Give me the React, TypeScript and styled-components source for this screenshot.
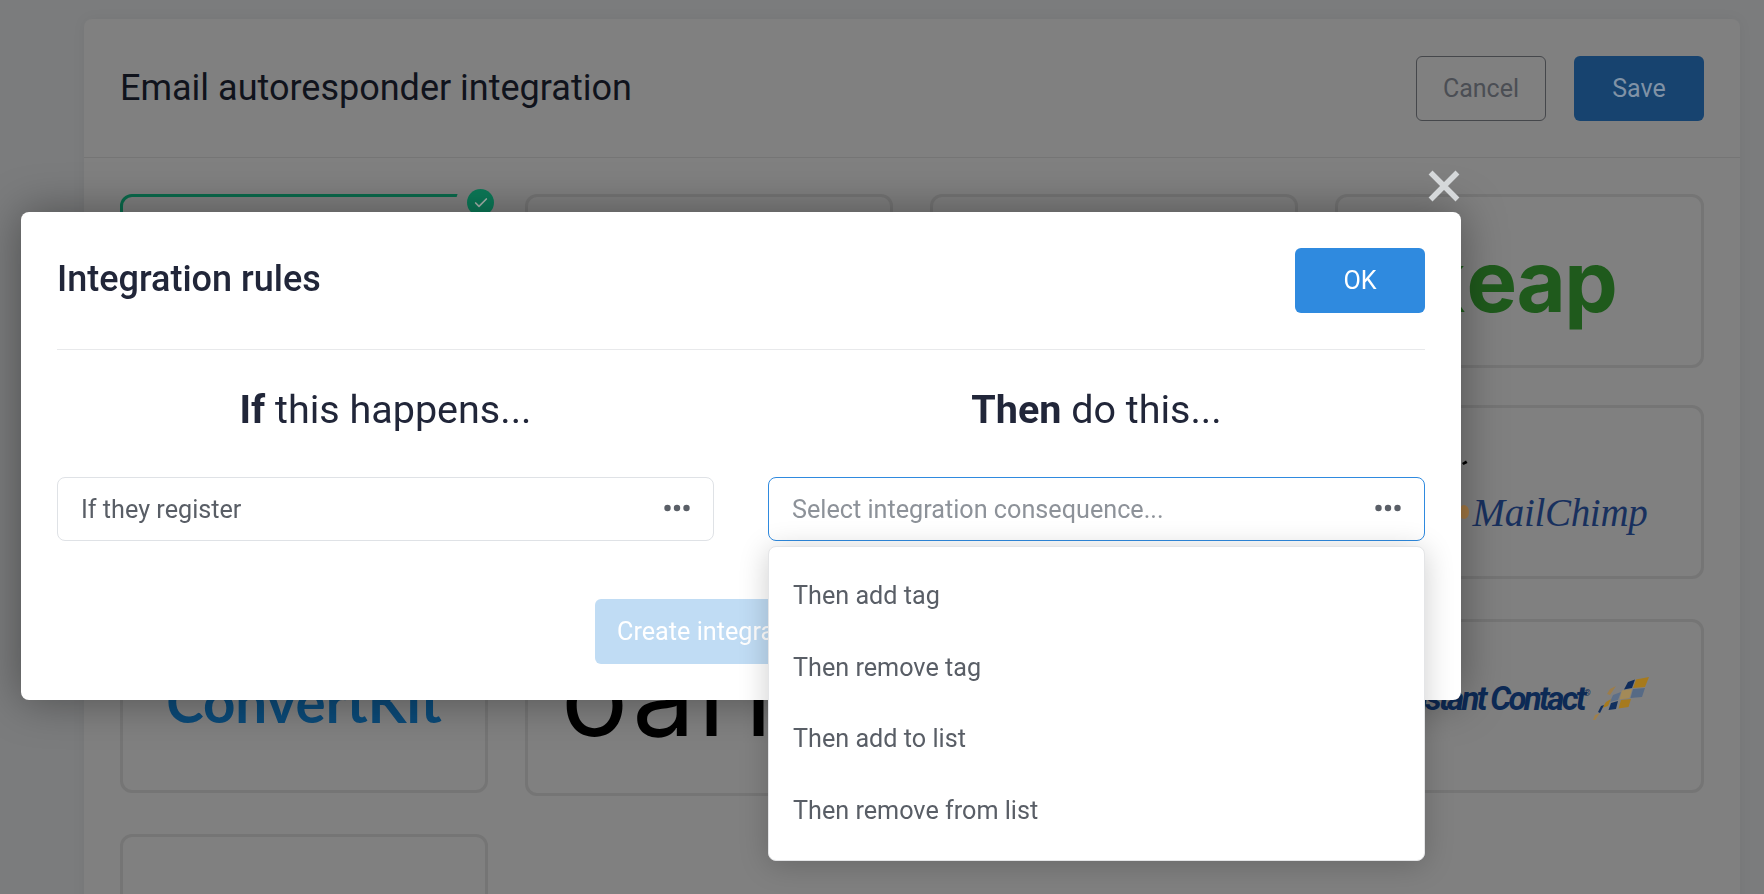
import React from "react";
import styled, { createGlobalStyle } from "styled-components";
import { Check } from "lucide-react";

const Global = createGlobalStyle`
  html, body { margin: 0; padding: 0; height: 100%; overflow: hidden; background: #7b7c7d; }
  * { box-sizing: border-box; }
  body { font-family: Roboto, "Liberation Sans", sans-serif; }
`;

const Page = styled.div`
  width: 1764px;
  height: 894px;
  overflow: hidden;
  padding: 19px 24px 0 84px;
`;
const Panel = styled.section`
  background: #808080;
  border-radius: 8px;
  box-shadow: 0 0 14px rgba(0, 0, 0, 0.05);
  height: 1200px;
`;
const PanelHeader = styled.header`
  height: 139px;
  display: flex;
  align-items: center;
  justify-content: space-between;
  padding: 0 36px 0 36px;
  border-bottom: 1px solid #757575;
`;
const PanelTitle = styled.h1`
  margin: 0;
  font-size: 36px;
  font-weight: 400;
  color: #10131c;
`;
const Actions = styled.div`
  display: flex;
  gap: 28px;
`;
const GhostButton = styled.button`
  width: 130px;
  height: 65px;
  background: transparent;
  border: 1px solid #45474b;
  border-radius: 6px;
  color: #4b4e54;
  font: 400 25px Roboto, sans-serif;
`;
const SaveButton = styled.button`
  width: 130px;
  height: 65px;
  background: #17436f;
  border: 0;
  border-radius: 6px;
  color: #8092a6;
  font: 400 25px Roboto, sans-serif;
`;
const Grid = styled.div`
  display: grid;
  grid-template-columns: 368px 368px 368px 369px;
  column-gap: 37px;
  row-gap: 37px;
  align-items: start;
  padding: 36px 36px 0 36px;
`;
const Tile = styled.div<{ $h: number; $selected?: boolean }>`
  position: relative;
  height: ${(p) => p.$h}px;
  border: 3px solid ${(p) => (p.$selected ? "#0a6b4c" : "#757575")};
  border-radius: 12px;
  display: flex;
  align-items: center;
  justify-content: center;
  overflow: visible;
  white-space: nowrap;
`;
const Badge = styled.span`
  position: absolute;
  top: -8px;
  right: -9px;
  width: 27px;
  height: 27px;
  border-radius: 50%;
  background: #0b7a58;
  color: #a7b5ae;
  box-shadow: 0 0 0 11px #808080;
  display: flex;
  align-items: center;
  justify-content: center;
`;
const KeapLogo = styled.span`
  font: 700 85px Inter, sans-serif;
  letter-spacing: -1.5px;
  color: #1f5a1c;
  margin: 0 0 0 -7px;
`;
const KeapK = styled.span`
  margin-right: 3px;
`;
const ConvertKitLogo = styled.span`
  font: 700 56.5px Lato, sans-serif;
  color: #0b4a78;
  margin-top: -10px;
`;
const WideLogo = styled.span`
  font: 400 112px Inter, sans-serif;
  letter-spacing: 3px;
  color: #000;
  margin: -26px 82px 0 0;
`;
const MailChimpLogo = styled.span`
  display: flex;
  align-items: center;
`;
const MailChimpText = styled.span`
  font: italic 400 39px "Liberation Serif", serif;
  letter-spacing: -0.3px;
  color: #18305e;
  margin-top: 40px;
`;
const ContactLogo = styled.span`
  display: flex;
  align-items: center;
  margin: -15px 12px 0 0;
`;
const ContactText = styled.span`
  font: italic 700 33px Roboto, sans-serif;
  letter-spacing: -2.7px;
  color: #0d2a55;
`;
const Registered = styled.sup`
  font-size: 9px;
  font-weight: 400;
  letter-spacing: 0;
  vertical-align: 14px;
  line-height: 0;
`;
const Backdrop = styled.div`
  position: fixed;
  inset: 0;
  padding: 212px 0 0 21px;
`;
const Modal = styled.div`
  position: relative;
  width: 1440px;
  height: 488px;
  background: #fff;
  border-radius: 8px;
  padding: 36px;
  box-shadow: 0 0 45px rgba(0, 0, 0, 0.38);
`;
const CloseIcon = styled.svg`
  position: absolute;
  top: -42px;
  right: 1px;
  width: 32px;
  height: 32px;
  color: #d5d8da;
`;
const ModalHeader = styled.div`
  display: flex;
  align-items: center;
  justify-content: space-between;
  padding-bottom: 36px;
  border-bottom: 1px solid #e8e9eb;
`;
const ModalTitle = styled.h2`
  margin: 0 0 3px;
  font-size: 36px;
  font-weight: 500;
  color: #212639;
`;
const PrimaryButton = styled.button<{ $faded?: boolean }>`
  height: 65px;
  min-width: 130px;
  padding: 0 22px;
  background: ${(p) => (p.$faded ? "#c0dcf4" : "#2f8adf")};
  border: 0;
  border-radius: 6px;
  color: #fff;
  font: 400 25.2px Roboto, sans-serif;
  white-space: nowrap;
`;
const Columns = styled.div`
  display: grid;
  grid-template-columns: 657px 657px;
  column-gap: 54px;
  margin-top: 38px;
`;
const Column = styled.div`
  position: relative;
`;
const ColumnHeading = styled.h3`
  margin: 0 0 45px;
  text-align: center;
  font-size: 39.5px;
  line-height: 44px;
  font-weight: 400;
  color: #212639;
  b { font-weight: 700; }
`;
const Select = styled.div<{ $focused?: boolean }>`
  height: 64px;
  display: flex;
  align-items: center;
  justify-content: space-between;
  padding: 0 23px;
  border: 1px solid ${(p) => (p.$focused ? "#2f8adf" : "#dfe2e6")};
  border-radius: 8px;
  font-size: 25.2px;
  color: ${(p) => (p.$focused ? "#8d9299" : "#595e66")};
`;
const Menu = styled.ul`
  position: absolute;
  top: 158px;
  left: 0;
  right: 0;
  height: 315px;
  margin: 0;
  padding: 13px 0 15px;
  list-style: none;
  background: #fff;
  border: 1px solid #e4e5e7;
  border-radius: 8px;
  box-shadow: 0 4px 30px rgba(0, 0, 0, 0.2);
`;
const MenuItem = styled.li`
  height: 71.5px;
  display: flex;
  align-items: center;
  padding-left: 24px;
  font-size: 25.2px;
  color: #595e66;
`;
const Footer = styled.div`
  display: flex;
  justify-content: center;
  margin-top: 58px;
`;

const Dots = () => (
  <svg width="26" height="8" viewBox="0 0 26 8" fill="#5a5f67" style={{ marginTop: -2 }}>
    <circle cx="3.5" cy="4" r="3.2" />
    <circle cx="13" cy="4" r="3.2" />
    <circle cx="22.5" cy="4" r="3.2" />
  </svg>
);

const Freddie = () => (
  <svg width="80" height="92" viewBox="0 0 80 92" style={{ marginRight: 1 }}>
    <path d="M70 17l4 -2.5 1.5 2.5 -4 2z" fill="#000" />
    <ellipse cx="72" cy="66" rx="5" ry="7" fill="#a57a45" />
  </svg>
);

const Tiles = () => (
  <svg width="58" height="44" viewBox="0 0 58 44" style={{ marginLeft: 2 }}>
    <g transform="translate(-1 -1)">
      <path d="M44 3.5 L57 1 L53 11 L41 12 Z" fill="#a67a1d" />
      <path d="M36 6 L43 3.5 L40 12 L32 13.5 Z" fill="#0f2c5c" />
      <path d="M41 13 L53 12 L50 21 L38.5 22 Z" fill="#566a85" />
      <path d="M30 14.5 L40 13 L37.5 22 L27.5 23.5 Z" fill="#a38a58" />
      <path d="M29 24 L39 23 L36.5 31 L26.5 32.5 Z" fill="#a67a1d" />
      <path d="M21 19 L29 16 L26 24 L18 26 Z" fill="#5d6f88" />
      <path d="M19 27 L26 25 L24 33 L16.5 34 Z" fill="#12305f" />
      <path d="M14 26 L19 23 L16 30 L10 32 Z" fill="#a67a1d" />
      <path d="M18 13 L24 10 L18 19 L15 18 Z" fill="#9c7d4a" />
      <path d="M9 30 L12 29 L8 37 L6 36 Z" fill="#12305f" />
      <path d="M3 39 L8 37 L3 44 L1 44 Z" fill="#a0804a" />
    </g>
  </svg>
);

const rows: { h: number; content?: React.ReactNode; selected?: boolean }[] = [
  { h: 174, selected: true },
  { h: 174 },
  { h: 174 },
  {
    h: 174,
    content: (
      <KeapLogo>
        <KeapK>k</KeapK>eap
      </KeapLogo>
    ),
  },
  { h: 174 },
  { h: 177 },
  { h: 174 },
  {
    h: 174,
    content: (
      <MailChimpLogo>
        <Freddie />
        <MailChimpText>MailChimp</MailChimpText>
      </MailChimpLogo>
    ),
  },
  { h: 174, content: <ConvertKitLogo>ConvertKit</ConvertKitLogo> },
  { h: 177, content: <WideLogo>oarl</WideLogo> },
  { h: 178 },
  {
    h: 174,
    content: (
      <ContactLogo>
        <ContactText>
          Constant Contact<Registered>®</Registered>
        </ContactText>
        <Tiles />
      </ContactLogo>
    ),
  },
  { h: 174 },
];

export default function App() {
  return (
    <>
      <Global />
      <Page>
        <Panel>
          <PanelHeader>
            <PanelTitle>Email autoresponder integration</PanelTitle>
            <Actions>
              <GhostButton>Cancel</GhostButton>
              <SaveButton>Save</SaveButton>
            </Actions>
          </PanelHeader>
          <Grid>
            {rows.map((r, i) => (
              <Tile key={i} $h={r.h} $selected={r.selected}>
                {r.selected && (
                  <Badge>
                    <Check size={16} strokeWidth={2.5} />
                  </Badge>
                )}
                {r.content}
              </Tile>
            ))}
          </Grid>
        </Panel>
      </Page>
      <Backdrop>
        <Modal>
          <CloseIcon viewBox="0 0 32 32" fill="none" stroke="currentColor" strokeWidth="5.5" strokeLinecap="square">
            <path d="M4.5 4.5 L27.5 27.5 M27.5 4.5 L4.5 27.5" />
          </CloseIcon>
          <ModalHeader>
            <ModalTitle>Integration rules</ModalTitle>
            <PrimaryButton>OK</PrimaryButton>
          </ModalHeader>
          <Columns>
            <Column>
              <ColumnHeading>
                <b>If</b> this happens...
              </ColumnHeading>
              <Select>
                If they register
                <Dots />
              </Select>
            </Column>
            <Column>
              <ColumnHeading>
                <b>Then</b> do this...
              </ColumnHeading>
              <Select $focused>
                Select integration consequence...
                <Dots />
              </Select>
              <Menu>
                <MenuItem>Then add tag</MenuItem>
                <MenuItem>Then remove tag</MenuItem>
                <MenuItem>Then add to list</MenuItem>
                <MenuItem>Then remove from list</MenuItem>
              </Menu>
            </Column>
          </Columns>
          <Footer>
            <PrimaryButton $faded>Create integration rule</PrimaryButton>
          </Footer>
        </Modal>
      </Backdrop>
    </>
  );
}
